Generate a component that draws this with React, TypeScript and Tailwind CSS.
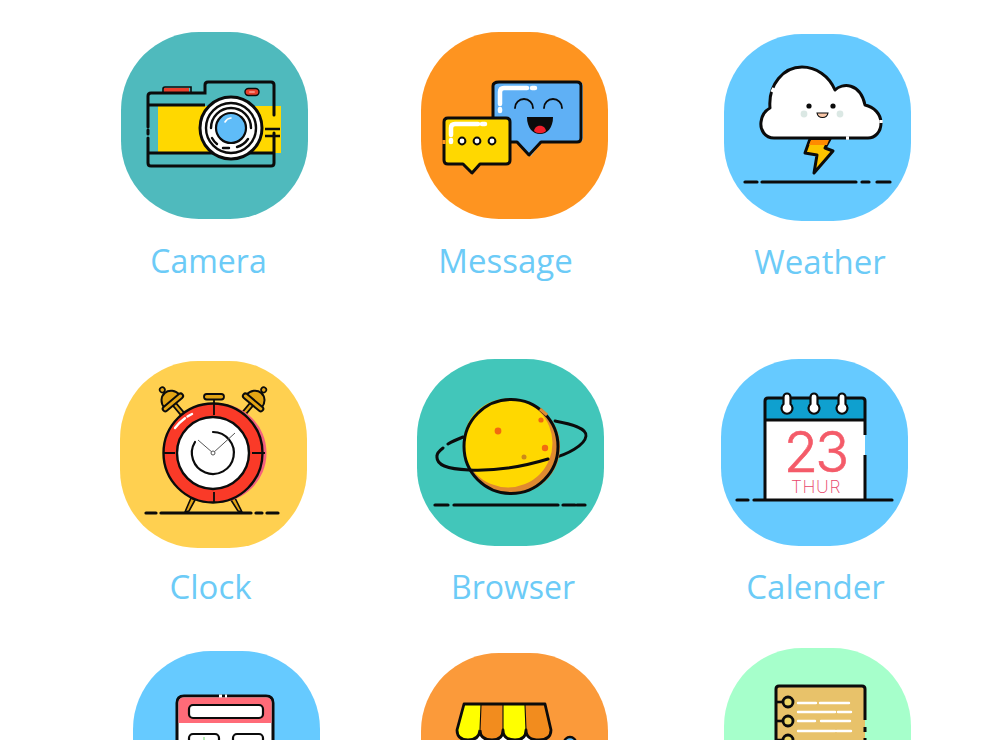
import React from 'react';

const K = '#0b0b0b';

const Ground: React.FC<{ y: number; segs: number[][] }> = ({ y, segs }) => (
  <g stroke={K} strokeWidth="3.2" strokeLinecap="round">
    {segs.map((s, i) => (
      <line key={i} x1={s[0]} x2={s[1]} y1={y} y2={y} />
    ))}
  </g>
);

const CameraIcon = () => (
  <>
    <rect x="37" y="74" width="123" height="47" fill="#ffd800" />
    <rect x="43" y="56" width="25" height="5" fill="#e8402c" />
    <path d="M42 61V57Q42 55 44 55H70V61" fill="none" stroke={K} strokeWidth="1.6" />
    <path d="M27 73H84M27 121H153" fill="none" stroke={K} strokeWidth="2.8" />
    <path d="M27 95V64Q27 61 30 61H84V53Q84 50 87 50H150Q153 50 153 53V83M153 101V131Q153 134 150 134H30Q27 134 27 131V106" fill="none" stroke={K} strokeWidth="3" strokeLinecap="round" />
    <line x1="27" y1="98" x2="27" y2="102" stroke={K} strokeWidth="3" strokeLinecap="round" />
    <rect x="124" y="56.5" width="14" height="7" rx="3.5" fill="#e8402c" stroke={K} strokeWidth="1.4" />
    <rect x="128" y="59" width="6" height="2" rx="1" fill="#f58a7a" />
    <path d="M144 97H159M144 104H159" stroke={K} strokeWidth="2.6" />
    <circle cx="110" cy="96" r="31" fill="#fff" stroke={K} strokeWidth="3" />
    <circle cx="110" cy="96" r="25" fill="none" stroke={K} strokeWidth="2.4" />
    <path d="M90 96A20 20 0 0 1 130 96M127 107A20 20 0 0 1 116 115M108 116H102M96 112A20 20 0 0 1 91 106" fill="none" stroke={K} strokeWidth="2.4" strokeLinecap="round" />
    <circle cx="110" cy="96" r="15" fill="#5fbcf8" stroke={K} strokeWidth="2.2" />
    <path d="M104 90A8 8 0 0 1 110 86" fill="none" stroke="#fff" strokeWidth="1.6" strokeLinecap="round" />
  </>
);

const MessageIcon = () => (
  <>
    <path d="M78 50H158Q162 50 162 54V106Q162 110 158 110H121L110 124L98 110H78Z" fill="#8fcdf5" />
    <path d="M78 50H156Q160 50 160 54V106Q160 110 156 110H120L108 123L96 110H76Q72 110 72 106V54Q72 50 78 50Z" fill="#5fb0f5" stroke={K} strokeWidth="3" strokeLinejoin="round" />
    <path d="M79 72V60Q79 56 83 56H106M111 56H114M79 77V79" fill="none" stroke="#fff" strokeWidth="4.5" strokeLinecap="round" />
    <path d="M94 76A9 9 0 0 1 112 76M123 76A9 9 0 0 1 141 76" fill="none" stroke={K} strokeWidth="1.8" strokeLinecap="round" />
    <path d="M106 85H132C132 96 126 102 119 102C112 102 106 96 106 85Z" fill={K} />
    <path d="M113 99C114 92 124 92 125 99C122 102 116 102 113 99Z" fill="#f0202c" />
    <path d="M27 86H85Q89 86 89 90V128Q89 132 85 132H59L51 141L42 132H27Q23 132 23 128V90Q23 86 27 86Z" fill="#ffd800" stroke={K} strokeWidth="3" strokeLinejoin="round" />
    <path d="M30 103V96Q30 92 34 92H57M61 92H64M30 108V110" fill="none" stroke="#fff" strokeWidth="4.5" strokeLinecap="round" />
    <line x1="23" y1="108" x2="23" y2="112" stroke="#ff9420" strokeWidth="3.2" />
    {[41, 56, 71].map((x) => (
      <circle key={x} cx={x} cy="109" r="3.4" fill="#fff" stroke={K} strokeWidth="2" />
    ))}
  </>
);

const WeatherIcon = () => (
  <>
    <path d="M86 105H106L101 114L109 117L90 139L93 121L81 119Z" fill="#fcc400" stroke={K} strokeWidth="3" strokeLinejoin="round" />
    <path d="M87 106H105L103 111H85Z" fill="#ff8a00" />
    <path d="M50 104C41 104 36 96 37 88C38 81 42 76 46 74C44 50 60 33 78 33C92 33 105 42 111 56C118 49 136 48 141 71C150 73 157 80 157 89C157 98 151 104 144 104Z" fill="#fff" stroke={K} strokeWidth="3" strokeLinejoin="round" />
    <path d="M122 104H125M48 58L50 54M157 86V89" stroke="#fff" strokeWidth="3.4" />
    <circle cx="85" cy="72" r="2.6" fill={K} />
    <circle cx="109" cy="72" r="2.6" fill={K} />
    <path d="M93 79H104C103 85 94 85 93 79Z" fill="#f9c7a8" stroke={K} strokeWidth="1.1" />
    <circle cx="80" cy="80" r="3.4" fill="#dbe8e4" />
    <circle cx="116" cy="80" r="3.4" fill="#dbe8e4" />
    <Ground y={148} segs={[[21, 33], [38, 132], [138, 145], [153, 166]]} />
  </>
);

const Bell: React.FC<{ x: number; angle: number }> = ({ x, angle }) => (
  <g transform={`translate(${x} 38) rotate(${angle})`}>
    <rect x="-2" y="4" width="4" height="21" fill="#e2a414" stroke={K} strokeWidth="1.8" />
    <circle cx="0" cy="-12" r="2.6" fill="#e2a414" stroke={K} strokeWidth="1.6" />
    <path d="M-10 3A10 11 0 0 1 10 3Z" fill="#e2a414" stroke={K} strokeWidth="2" strokeLinejoin="round" />
    <rect x="-12.5" y="2" width="25" height="5" rx="2.5" fill="#e2a414" stroke={K} strokeWidth="2" />
  </g>
);

const ClockIcon = () => (
  <>
    <Bell x={50} angle={-40} />
    <Bell x={136} angle={40} />
    <path d="M71 137L65 151L69 150L75 139ZM115 137L122 151L118 150L111 139Z" fill="#e2a414" stroke={K} strokeWidth="1.6" strokeLinejoin="round" />
    <circle cx="97" cy="92" r="49.5" fill="#f4607c" />
    <rect x="84" y="33" width="20" height="5.5" rx="2.7" fill="#e2a414" stroke={K} strokeWidth="1.8" />
    <path d="M94 38V44" stroke={K} strokeWidth="1.8" />
    <circle cx="93" cy="92" r="49.5" fill="#fa3a28" stroke={K} strokeWidth="2.4" />
    <path d="M94 43V54M94 131V141M43 92H55M132 92H145" stroke={K} strokeWidth="1.8" />
    <path d="M55 67A46 46 0 0 1 72 53" fill="none" stroke="#fff" strokeWidth="2.4" strokeLinecap="round" strokeDasharray="14 3" />
    <circle cx="93" cy="92" r="36" fill="#fff" stroke={K} strokeWidth="2.4" />
    <path d="M75 81A21 21 0 1 0 93 71" fill="none" stroke={K} strokeWidth="2.2" strokeLinecap="round" />
    <path d="M78 79L93 92L115 72" fill="none" stroke="#555" strokeWidth="1" />
    <circle cx="93" cy="92" r="2" fill="#fff" stroke="#555" strokeWidth="1" />
    <Ground y={152} segs={[[26, 36], [41, 131], [136, 142], [147, 158]]} />
  </>
);

const BrowserIcon = () => (
  <>
    <path d="M138 62C154 65 170 69 169 77C168 86 150 96 135 99" fill="none" stroke={K} strokeWidth="2.8" strokeLinecap="round" />
    <circle cx="96" cy="88" r="47" fill="#e08a30" />
    <circle cx="91" cy="84" r="44.5" fill="#ffd800" />
    <circle cx="94" cy="87.5" r="47" fill="none" stroke={K} strokeWidth="3" />
    <path d="M123 50L130 56" stroke="#e08a30" strokeWidth="3" />
    <path d="M131 100C105 108 75 112 52 111C30 110 19 106 20 97C20 94 22 92 26 89M31 85C36 82 41 80 46 78" fill="none" stroke={K} strokeWidth="3" strokeLinecap="round" />
    <circle cx="81" cy="72" r="3.4" fill="#f26a10" />
    <circle cx="124" cy="61" r="2.6" fill="#f26a10" />
    <circle cx="128" cy="89" r="3.2" fill="#f26a10" />
    <circle cx="107" cy="98" r="2.5" fill="#cc8a18" />
    <Ground y={146} segs={[[18, 31], [37, 141], [146, 158], [160, 168]]} />
  </>
);

const CalenderIcon = () => (
  <>
    <path d="M44 61V42Q44 39 47 39H141Q144 39 144 42V61Z" fill="#0fa0cf" />
    <rect x="44" y="61" width="100" height="80" fill="#fff" />
    <path d="M144 76V42Q144 39 141 39H47Q44 39 44 42V141M144 96V141M44 61H144" fill="none" stroke={K} strokeWidth="3" />
    {[66, 93, 121].map((x) => (
      <path key={x} d={`M${x - 3.5} 38A3.5 3.5 0 0 1 ${x + 3.5} 38V45A5.5 5.5 0 1 1 ${x - 3.5} 45Z`} fill="#fff" stroke={K} strokeWidth="2.2" />
    ))}
    <text x="94" y="113" textAnchor="middle" fontFamily="'Inter', 'Liberation Sans', sans-serif" fontWeight="300" fontSize="56" fill="#f45b69" stroke="#f45b69" strokeWidth="0.6" letterSpacing="-3">23</text>
    <text x="95" y="134" textAnchor="middle" fontFamily="'Inter', 'Liberation Sans', sans-serif" fontWeight="200" fontSize="17.5" fill="#e8456a" letterSpacing="0.6">THUR</text>
    <Ground y={141} segs={[[16, 27], [33, 171]]} />
  </>
);

const WindowIcon = () => (
  <>
    <path d="M44 130V52Q44 45 51 45H133Q140 45 140 52V130Z" fill="#fff" stroke={K} strokeWidth="3" />
    <path d="M45.5 72V52Q45.5 46.5 51 46.5H133Q138.5 46.5 138.5 52V72Z" fill="#ff6b78" />
    <rect x="56" y="54" width="74" height="13" rx="4" fill="#fff" stroke={K} strokeWidth="2.2" />
    <rect x="56" y="83" width="30" height="30" rx="4" fill="#fff" stroke={K} strokeWidth="2.2" />
    <rect x="100" y="83" width="30" height="30" rx="4" fill="#fff" stroke={K} strokeWidth="2.2" />
    <path d="M71 86V89" stroke="#9ee89a" strokeWidth="1.5" />
    <path d="M86 45H89M92 45H94" stroke="#fff" strokeWidth="3" />
  </>
);

const ShopIcon = () => (
  <>
    <path d="M52 80H120V90H52Z" fill="#fff" />
    <path d="M43 51H60L59 77Q58 87 47 87Q36 87 36 77Z" fill="#ffff00" />
    <path d="M60 51H82V77Q82 87 71 87Q59 87 59 77Z" fill="#f28c1e" />
    <path d="M82 51H104L105 77Q105 87 94 87Q82 87 82 77Z" fill="#ffff00" />
    <path d="M104 51H124L130 77Q130 87 118 87Q105 87 105 77Z" fill="#f28c1e" />
    <path d="M60 52L59 77M82 52V77M104 52L105 77" stroke={K} strokeWidth="1.1" fill="none" />
    <path d="M59 77Q58 87 47 87Q36 87 36 77L43 51H124L130 77Q130 87 118 87Q105 87 105 77Q105 87 94 87Q82 87 82 77Q82 87 71 87Q59 87 59 77" fill="none" stroke={K} strokeWidth="2.8" strokeLinejoin="round" />
    <circle cx="149" cy="90" r="6" fill="#5fbcf8" stroke={K} strokeWidth="2.4" />
  </>
);

const NotesIcon = () => (
  <>
    <path d="M52 100V41Q52 38 55 38H138Q141 38 141 41V100Z" fill="#e8c26a" />
    <path d="M52 100V41Q52 38 55 38H138Q141 38 141 41V72M141 79V84M141 90V100" fill="none" stroke={K} strokeWidth="3" />
    <g stroke="#fff" strokeWidth="2.4" strokeLinecap="round" fill="none">
      <path d="M74 55H92M96 55H125M74 64H111M114 64H127M74 73H91M97 73H126M74 83H111M113 83H127" />
    </g>
    {[54, 73, 92].map((y) => (
      <g key={y}>
        <path d={`M52 ${y}H59`} stroke={K} strokeWidth="2.6" />
        <circle cx="64" cy={y} r="5" fill="#ecd566" stroke={K} strokeWidth="2.8" />
      </g>
    ))}
  </>
);

type Item = {
  label?: string;
  tile: string;
  face: string;
  text?: string;
  icon: React.ReactNode;
};

const Tile: React.FC<Item> = ({ label, tile, face, text, icon }) => (
  <div className={`w-[187px] shrink-0 ${tile}`}>
    <div className={`h-[187px] w-[187px] rounded-[78px] ${face}`}>
      <svg viewBox="0 0 187 187" className="h-full w-full">
        {icon}
      </svg>
    </div>
    {label && (
      <div className={`whitespace-nowrap text-center font-['Open_Sans','Noto_Sans',sans-serif] leading-[46px] text-[#6ccbf7] ${text ?? ''}`}>
        {label}
      </div>
    )}
  </div>
);

const App: React.FC = () => {
  return (
    <div className="h-[740px] w-[1000px] overflow-hidden bg-white">
      <div className="flex h-[359px] items-start">
        <Tile label="Camera" tile="ml-[121px] mt-[32px]" face="bg-[#4fbabd]" text="mt-[19px] pr-[12px] text-[32px]" icon={<CameraIcon />} />
        <Tile label="Message" tile="ml-[113px] mt-[32px]" face="bg-[#fe9420]" text="mt-[19px] pr-[18px] text-[33px]" icon={<MessageIcon />} />
        <Tile label="Weather" tile="ml-[116px] mt-[34px]" face="bg-[#66caff]" text="mt-[18px] pl-[5px] text-[33px]" icon={<WeatherIcon />} />
      </div>
      <div className="flex h-[289px] items-start">
        <Tile label="Clock" tile="ml-[120px] mt-[2px]" face="bg-[#ffd050]" text="mt-[16px] pr-[6px] text-[33px]" icon={<ClockIcon />} />
        <Tile label="Browser" tile="ml-[110px]" face="bg-[#42c6ba]" text="mt-[18px] pl-[5px] text-[32px]" icon={<BrowserIcon />} />
        <Tile label="Calender" tile="ml-[117px]" face="bg-[#66caff]" text="mt-[18px] pl-[2px] text-[33px]" icon={<CalenderIcon />} />
      </div>
      <div className="flex items-start">
        <Tile tile="ml-[133px] mt-[3px]" face="bg-[#66caff]" icon={<WindowIcon />} />
        <Tile tile="ml-[101px] mt-[5px]" face="bg-[#fb9a3a]" icon={<ShopIcon />} />
        <Tile tile="ml-[116px]" face="bg-[#a6ffcb]" icon={<NotesIcon />} />
      </div>
    </div>
  );
};

export default App;
